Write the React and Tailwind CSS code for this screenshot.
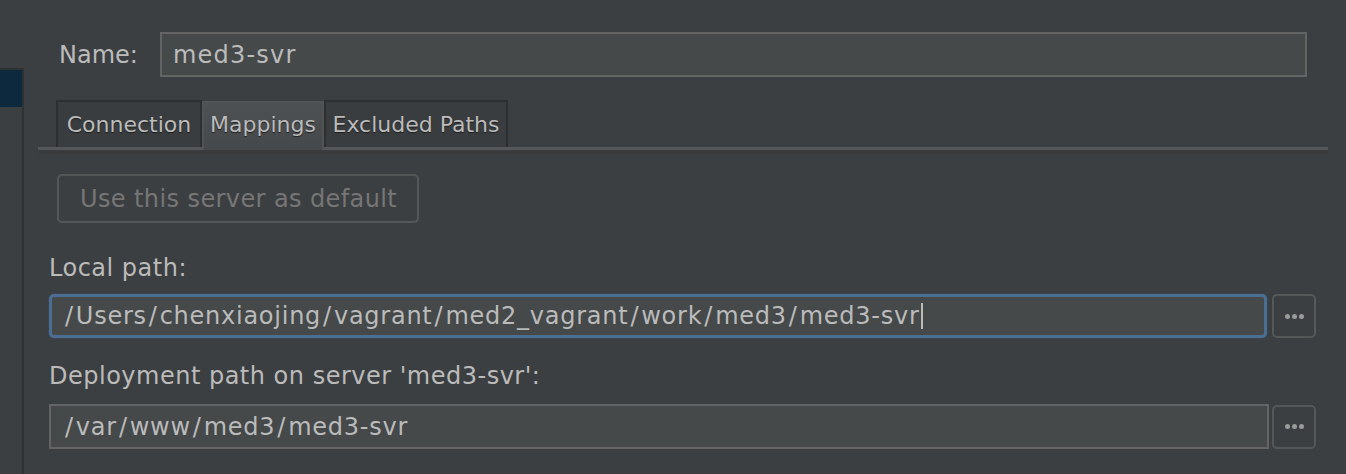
import React from "react";

const font = { fontFamily: '"DejaVu Sans", "Liberation Sans", sans-serif' };

function Dots() {
  return (
    <div className="w-[44px] h-[44px] shrink-0 rounded-[5px] border-2 border-[#555859] bg-[#3c3f41] flex items-center justify-center gap-[2px]">
      <span className="w-[5px] h-[5px] rounded-full bg-[#9a9a9a]" />
      <span className="w-[5px] h-[5px] rounded-full bg-[#9a9a9a]" />
      <span className="w-[5px] h-[5px] rounded-full bg-[#9a9a9a]" />
    </div>
  );
}

function PathText({ text }) {
  const parts = text.split("/");
  return (
    <span className="tracking-[0.75px]">
      {parts.map((p, i) => (
        <React.Fragment key={i}>
          {i > 0 && <span className="mx-[2px]">/</span>}
          {p}
        </React.Fragment>
      ))}
    </span>
  );
}

export default function App() {
  return (
    <div
      className="w-[1346px] h-[474px] bg-[#3c3f41] flex overflow-hidden text-[#bbbbbb] tracking-[0.5px]"
      style={font}
    >
      {/* sidebar */}
      <div className="w-[24px] shrink-0 flex flex-col">
        <div className="h-[68px]" />
        <div className="flex-1 border-t-2 border-r-2 border-[#2f3133]">
          <div className="h-[37px] bg-[#0d293e]" />
        </div>
      </div>

      {/* main */}
      <div className="flex-1 flex flex-col pl-[14px] pr-[18px]">
        {/* name row */}
        <div className="mt-[32px] flex items-center pl-[21px]">
          <div className="w-[101px] text-[24px] leading-[28px] tracking-normal">Name:</div>
          <div className="w-[1147px] h-[45px] border-2 border-[#646464] bg-[#45494a] flex items-center pl-[11px] text-[24px] leading-[28px] tracking-[1.2px]">
            med3-svr
          </div>
        </div>

        {/* tabs */}
        <div className="mt-[23px] flex items-end pl-[18px] h-[47px] tracking-normal">
          <div className="h-[47px] w-[146px] border-2 border-b-0 border-[#2d2f30] bg-[#3a3d3f] flex items-center justify-center text-[22px] leading-[26px] [text-shadow:0_1px_1px_#1e1e1e]">
            Connection
          </div>
          <div className="h-[49px] w-[122px] -mb-[3px] border-2 border-b-0 border-[#515455] bg-gradient-to-b from-[#4e5153] to-[#46494b] flex items-center justify-center text-[22px] leading-[26px] pb-[3px] relative z-10 [text-shadow:0_1px_1px_#1e1e1e]">
            Mappings
          </div>
          <div className="h-[47px] w-[184px] border-2 border-b-0 border-[#2d2f30] bg-[#3a3d3f] flex items-center justify-center text-[22px] leading-[26px] [text-shadow:0_1px_1px_#1e1e1e]">
            Excluded Paths
          </div>
        </div>
        <div className="h-[3px] bg-[#55585a]" />
        <div className="h-[4px] bg-[#393b3d]" />

        {/* content */}
        <div className="flex flex-col pl-[11px]">
          <div className="mt-[20px] ml-[8px] w-[362px] h-[49px] shrink-0 rounded-[5px] border-2 border-[#545758] flex items-center pl-[21px] text-[24px] leading-[28px] text-[#767676] tracking-[0.4px]">
            Use this server as default
          </div>

          <div className="mt-[31px] text-[24px] leading-[28px]">Local path:</div>
          <div className="mt-[12px] flex items-center">
            <div className="w-[1218px] h-[44px] rounded-[5px] border-[3px] border-[#4a6f93] bg-[#45494a] flex items-center pl-[11px] text-[24px] leading-[28px] shadow-[0_0_2px_#3d5a78]">
              <PathText text="/Users/chenxiaojing/vagrant/med2_vagrant/work/med3/med3-svr" />
              <span className="w-[2px] h-[26px] bg-[#bbbbbb] ml-[1px]" />
            </div>
            <div className="ml-[5px]">
              <Dots />
            </div>
          </div>

          <div className="mt-[24px] text-[24px] leading-[28px]">Deployment path on server 'med3-svr':</div>
          <div className="mt-[14px] flex items-center">
            <div className="w-[1220px] h-[45px] border-2 border-[#646464] bg-[#45494a] flex items-center pl-[12px] text-[24px] leading-[28px]">
              <PathText text="/var/www/med3/med3-svr" />
            </div>
            <div className="ml-[3px]">
              <Dots />
            </div>
          </div>
        </div>
      </div>
    </div>
  );
}
